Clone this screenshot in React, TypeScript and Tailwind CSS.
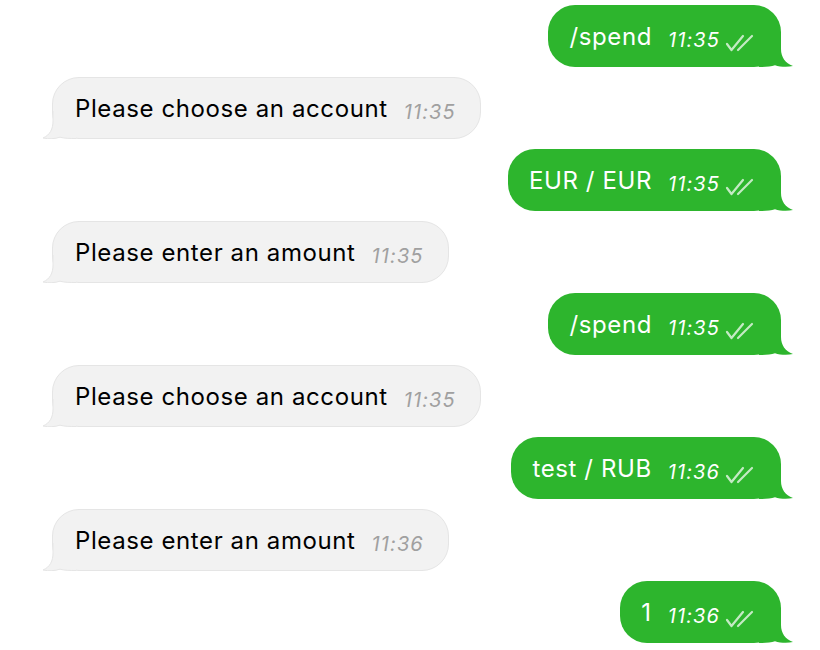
import React from 'react'

type Msg = { text: string; time: string; out: boolean }

const messages: Msg[] = [
  { text: '/spend', time: '11:35', out: true },
  { text: 'Please choose an account', time: '11:35', out: false },
  { text: 'EUR / EUR', time: '11:35', out: true },
  { text: 'Please enter an amount', time: '11:35', out: false },
  { text: '/spend', time: '11:35', out: true },
  { text: 'Please choose an account', time: '11:35', out: false },
  { text: 'test / RUB', time: '11:36', out: true },
  { text: 'Please enter an amount', time: '11:36', out: false },
  { text: '1', time: '11:36', out: true },
]

function Checks() {
  return (
    <svg width="30" height="18" viewBox="0 0 30 18" fill="none" className="block">
      <g stroke="rgba(255,255,255,0.72)" strokeWidth="2.2" strokeLinecap="round" strokeLinejoin="round">
        <path d="M2 10 L6.5 16 L18 2" />
        <path d="M13 16 L27 2" />
      </g>
    </svg>
  )
}

function OutTail() {
  return (
    <svg width="34" height="28" viewBox="0 0 34 28" className="absolute right-[-12px] bottom-0">
      <path d="M0 0 H22 V10 C22 18 26 24 34 27 C28 28.3 21 27.8 16 26.2 C12 27.6 6 28 0 28 Z" fill="#2db52d" />
    </svg>
  )
}

function InTail() {
  return (
    <svg width="34" height="28" viewBox="0 0 34 28" className="absolute left-[-11px] bottom-[-1px]">
      <path d="M34 0 H11 V10 C11 18 8 24 1 27 C7 28.3 13 27.8 18 26.2 C22 27.6 28 28 34 28 Z" fill="#f2f2f2" />
      <path d="M11 0 V10 C11 18 8 24 1 27 C7 28.3 13 27.8 18 26.2 C22 27.4 28 27.5 34 27.5" fill="none" stroke="#e5e5e5" strokeWidth="1" />
    </svg>
  )
}

function Bubble({ msg }: { msg: Msg }) {
  if (msg.out) {
    return (
      <div className="flex justify-end pr-[39px]">
        <div className="relative flex items-baseline h-[62px] rounded-[27px] bg-[#2db52d] pl-[21px] pr-[26px] pt-[18px] text-white">
          <span className="relative text-[24px] leading-[28px] tracking-[0.6px]">{msg.text}</span>
          <span className="relative ml-[16px] text-[20px] italic leading-[28px] tracking-[1.1px] translate-y-[2px]">{msg.time}</span>
          <span className="relative ml-[5px] self-start mt-[11px]">
            <Checks />
          </span>
          <OutTail />
        </div>
      </div>
    )
  }
  return (
    <div className="flex justify-start pl-[52px]">
      <div className="relative flex items-baseline h-[62px] rounded-[27px] border border-[#e5e5e5] bg-[#f2f2f2] pl-[22px] pr-[24px] pt-[17px] text-black">
        <span className="relative z-10 text-[24px] leading-[28px] tracking-[0.6px]">{msg.text}</span>
        <span className="relative z-10 ml-[16px] text-[20px] italic leading-[28px] tracking-[1.1px] text-[#a0a0a0] translate-y-[2px]">{msg.time}</span>
        <InTail />
      </div>
    </div>
  )
}

export default function App() {
  return (
    <div
      className="w-[820px] h-[650px] bg-white overflow-hidden flex flex-col gap-[10px] pt-[5px]"
      style={{ fontFamily: 'Inter, "Liberation Sans", sans-serif' }}
    >
      {messages.map((m, i) => (
        <Bubble key={i} msg={m} />
      ))}
    </div>
  )
}
